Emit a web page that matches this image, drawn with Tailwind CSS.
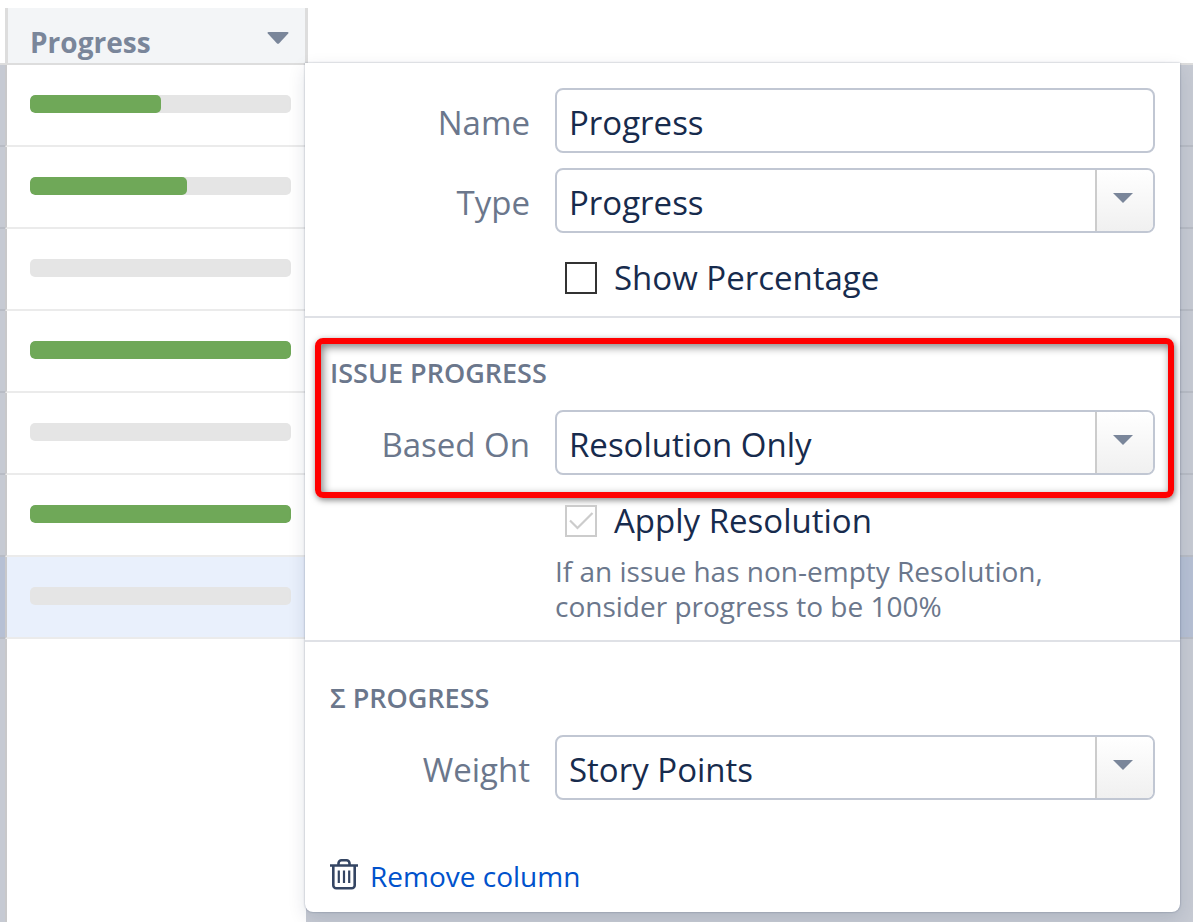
<!DOCTYPE html>
<html lang="en">
<head>
    <meta charset="UTF-8">
    <meta name="viewport" content="width=device-width, initial-scale=1.0">
    <title>Progress column settings</title>
    <script src="https://cdn.jsdelivr.net/npm/@tailwindcss/browser@4"></script>
</head>
<body class="bg-white font-['Open_Sans','Noto_Sans',sans-serif] text-[#172b4d]">
    <div class="relative flex min-h-screen flex-col overflow-hidden pt-2">
        <table class="w-full table-fixed border-separate border-spacing-0">
            <colgroup>
                <col class="w-[5px]">
                <col class="w-[303px]">
                <col>
            </colgroup>
            <thead>
                <tr class="h-[57px]">
                    <td class="border-b-2 border-[#dddddd] p-0"></td>
                    <th class="border-x-3 border-b-2 border-[#dddddd] bg-[#f3f5f7] p-0 text-left">
                        <button type="button" class="flex w-full items-center justify-between pt-3 pr-4 pl-[22px] text-[28px] leading-9 font-bold text-[#7a869a]">
                            Progress
                            <svg class="mb-2 h-3 w-[22px]" viewBox="0 0 22 12" fill="currentColor" aria-hidden="true"><path d="M1.5 0h19c1 0 1.300 .8.7 1.500L12.200 11.200c-.7.7-1.700.7-2.400 0L.8 1.500C.2.8.5 0 1.500 0z"/></svg>
                        </button>
                    </th>
                    <td class="border-b-2 border-[#dddddd] p-0"></td>
                </tr>
            </thead>
            <tbody id="rows"></tbody>
        </table>
        <div class="flex flex-1">
            <div class="w-[5px] bg-[#c6cad3]"></div>
            <div class="w-[301px] border-l-2 border-[#c8c8ca] bg-white"></div>
            <div class="flex-1 bg-[#c6cad3]"></div>
        </div>

        <!-- column settings -->
        <form class="absolute top-[63px] right-[13px] left-[305px] rounded-b-lg bg-white pb-[18px] shadow-[0_0_2px_rgba(9,30,66,0.4),0_6px_18px_rgba(9,30,66,0.12)]">
            <div class="border-b-2 border-[#dfe1e6] px-[25px] pt-[25px] pb-2">
                <div class="grid grid-cols-[200px_1fr] items-center gap-x-[25px] gap-y-[15px]">
                    <label for="name" class="pt-1 text-right text-[33px] leading-[44px] text-[#6b778c]">Name</label>
                    <input id="name" type="text" value="Progress" class="h-[65px] w-full min-w-0 rounded-lg border-2 border-[#c1c7d3] bg-white px-3 pt-1 text-[33px]">
                    <label for="type" class="pt-1 text-right text-[33px] leading-[44px] text-[#6b778c]">Type</label>
                    <div class="relative">
                        <select id="type" class="block h-[65px] w-full appearance-none rounded-lg border-2 border-[#c1c7d3] bg-white px-3 pt-1 text-[33px]">
                            <option>Progress</option>
                        </select>
                        <span class="pointer-events-none absolute inset-y-0.5 right-0.5 flex w-[58px] items-center justify-center rounded-r-md border-l-2 border-[#cccccc] bg-linear-to-b from-white to-[#f0f0f0] pr-1 pb-1.5 text-[#7a869a]">
                            <svg class="h-2.5 w-5" viewBox="0 0 20 10" fill="currentColor"><path d="M0 0h20L10 10z"/></svg>
                        </span>
                    </div>
                    <label class="col-start-2 flex h-[60px] items-center gap-[17px] pl-2.5 text-[33px]">
                        <input type="checkbox" class="size-8 appearance-none border-2 border-[#333333] bg-white">
                        Show Percentage
                    </label>
                </div>
            </div>

            <div class="border-b-2 border-[#dfe1e6] px-[25px] pt-[37px] pb-4">
                <div class="relative">
                    <h2 class="mb-[19px] text-[27px] leading-9 font-semibold text-[#6b778c]">ISSUE PROGRESS</h2>
                    <div class="grid grid-cols-[200px_1fr] items-center gap-x-[25px]">
                        <label for="based-on" class="pt-1 text-right text-[33px] leading-[44px] text-[#6b778c]">Based On</label>
                        <div class="relative">
                            <select id="based-on" class="block h-[65px] w-full appearance-none rounded-lg border-2 border-[#c1c7d3] bg-white px-3 pt-1 text-[33px]">
                                <option>Resolution Only</option>
                            </select>
                            <span class="pointer-events-none absolute inset-y-0.5 right-0.5 flex w-[58px] items-center justify-center rounded-r-md border-l-2 border-[#cccccc] bg-linear-to-b from-white to-[#f0f0f0] pr-1 pb-1.5 text-[#7a869a]">
                                <svg class="h-2.5 w-5" viewBox="0 0 20 10" fill="currentColor"><path d="M0 0h20L10 10z"/></svg>
                            </span>
                        </div>
                    </div>
                    <div class="pointer-events-none absolute -top-[17px] -right-[19px] -bottom-[23px] -left-[15px] rounded-lg border-6 border-[#ff0000] shadow-[1px_2px_6px_rgba(0,0,0,0.5),inset_2px_3px_8px_rgba(0,0,0,0.5)]"></div>
                </div>
                <div class="pt-4 pl-[225px]">
                    <label class="flex h-[60px] items-center gap-[17px] pl-2.5 text-[33px]">
                        <span class="relative size-8">
                            <input type="checkbox" checked disabled class="block size-8 appearance-none border-2 border-[#cccccc] bg-white">
                            <svg class="absolute inset-0 size-8" viewBox="0 0 32 32" fill="none" stroke="#cccccc" stroke-width="2.200"><path d="M5 15.500l7.500 7.500L27.500 8"/></svg>
                        </span>
                        Apply Resolution
                    </label>
                    <p class="mt-[3px] text-[28px] leading-[35px] text-[#6b778c]">If an issue has non-empty Resolution,<br>consider progress to be 100%</p>
                </div>
            </div>

            <div class="px-[25px] pt-[38px]">
                <h2 class="mb-[19px] text-[27px] leading-9 font-semibold text-[#6b778c]">Σ PROGRESS</h2>
                <div class="grid grid-cols-[200px_1fr] items-center gap-x-[25px]">
                    <label for="weight" class="pt-1 text-right text-[33px] leading-[44px] text-[#6b778c]">Weight</label>
                    <div class="relative">
                        <select id="weight" class="block h-[65px] w-full appearance-none rounded-lg border-2 border-[#c1c7d3] bg-white px-3 pt-1 text-[33px]">
                            <option>Story Points</option>
                        </select>
                        <span class="pointer-events-none absolute inset-y-0.5 right-0.5 flex w-[58px] items-center justify-center rounded-r-md border-l-2 border-[#cccccc] bg-linear-to-b from-white to-[#f0f0f0] pr-1 pb-1.5 text-[#7a869a]">
                            <svg class="h-2.5 w-5" viewBox="0 0 20 10" fill="currentColor"><path d="M0 0h20L10 10z"/></svg>
                        </span>
                    </div>
                </div>
                <a href="#" class="mt-[58px] flex w-fit items-center gap-3 text-[28px] leading-9 text-[#0052cc]">
                    <svg class="mb-1 h-8 w-7" viewBox="0 0 28 32" fill="none" stroke="#344563" stroke-width="2.600" aria-hidden="true">
                        <path d="M0 7.500h28M3.300 7.500v19.700a3 3 0 0 0 3 3h15.400a3 3 0 0 0 3-3V7.500M8.500 7.500V5.200a3 3 0 0 1 3-3h5a3 3 0 0 1 3 3v2.300"/>
                        <path stroke-width="2.200" d="M8.800 12.500v12.500M14 12.500v12.500M19.200 12.500v12.500"/>
                    </svg>
                    Remove column
                </a>
            </div>
        </form>
    </div>

    <script>
        const rows = [
            { progress: 50 },
            { progress: 60 },
            { progress: 0 },
            { progress: 100 },
            { progress: 0 },
            { progress: 100 },
            { progress: 0, selected: true }
        ];

        document.getElementById('rows').innerHTML = rows.map(row => {
            const side = row.selected ? 'bg-[#b6c0d4]' : 'bg-[#c6cad3]';
            const cell = row.selected ? 'bg-[#e9f0fc]' : 'bg-white';
            return `
                <tr class="h-[82px]">
                    <td class="border-b-2 border-[#b8bcc5] p-0 ${side}"></td>
                    <td class="border-b-2 border-l-2 border-b-[#ebebeb] border-l-[#c8c8ca] pt-0 pr-[17px] pb-0.5 pl-[23px] ${cell}">
                        <div class="h-[18px] overflow-hidden rounded-[5px] bg-[#e5e5e5]">
                            <div class="h-full rounded-[5px] bg-[#6fa858]" style="width: ${row.progress}%"></div>
                        </div>
                    </td>
                    <td class="border-b-2 border-[#b8bcc5] p-0 ${side}"></td>
                </tr>`;
        }).join('');
    </script>
</body>
</html>
